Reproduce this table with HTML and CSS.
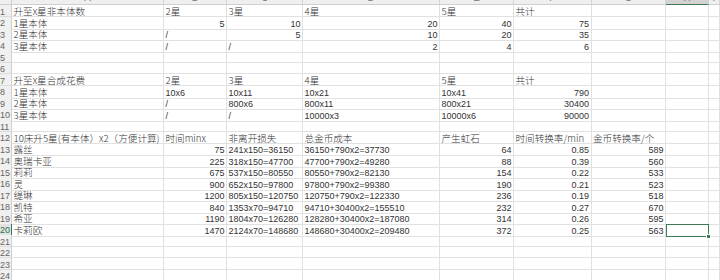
FILE: index.html
```html
<!DOCTYPE html>
<html lang="zh-CN">
<head>
<meta charset="utf-8">
<title>Sheet</title>
<link rel="stylesheet" href="styles.css">
</head>
<body>
<div class="sheet">
  <div class="hdr">
    <div class="corner"></div>
    <div class="ch"><span>A</span></div>
    <div class="ch"><span>B</span></div>
    <div class="ch"><span>C</span></div>
    <div class="ch"><span>D</span></div>
    <div class="ch"><span>E</span></div>
    <div class="ch"><span>F</span></div>
    <div class="ch"><span>G</span></div>
    <div class="ch cur"><span>H</span></div>
    <div class="ch"><span>I</span></div>
  </div>

  <div class="row"><div class="rh">1</div><div class="c t">升至x星非本体数</div><div class="c t">2星</div><div class="c t">3星</div><div class="c t">4星</div><div class="c t">5星</div><div class="c t">共计</div><div class="c"></div><div class="c"></div><div class="c"></div></div>
  <div class="row"><div class="rh">2</div><div class="c t">1星本体</div><div class="c n">5</div><div class="c n">10</div><div class="c n">20</div><div class="c n">40</div><div class="c n">75</div><div class="c"></div><div class="c"></div><div class="c"></div></div>
  <div class="row"><div class="rh">3</div><div class="c t">2星本体</div><div class="c f">/</div><div class="c n">5</div><div class="c n">10</div><div class="c n">20</div><div class="c n">35</div><div class="c"></div><div class="c"></div><div class="c"></div></div>
  <div class="row"><div class="rh">4</div><div class="c t">3星本体</div><div class="c f">/</div><div class="c f">/</div><div class="c n">2</div><div class="c n">4</div><div class="c n">6</div><div class="c"></div><div class="c"></div><div class="c"></div></div>
  <div class="row"><div class="rh">5</div><div class="c"></div><div class="c"></div><div class="c"></div><div class="c"></div><div class="c"></div><div class="c"></div><div class="c"></div><div class="c"></div><div class="c"></div></div>
  <div class="row"><div class="rh">6</div><div class="c"></div><div class="c"></div><div class="c"></div><div class="c"></div><div class="c"></div><div class="c"></div><div class="c"></div><div class="c"></div><div class="c"></div></div>
  <div class="row"><div class="rh">7</div><div class="c t">升至x星合成花费</div><div class="c t">2星</div><div class="c t">3星</div><div class="c t">4星</div><div class="c t">5星</div><div class="c t">共计</div><div class="c"></div><div class="c"></div><div class="c"></div></div>
  <div class="row"><div class="rh">8</div><div class="c t">1星本体</div><div class="c f">10x6</div><div class="c f">10x11</div><div class="c f">10x21</div><div class="c f">10x41</div><div class="c n">790</div><div class="c"></div><div class="c"></div><div class="c"></div></div>
  <div class="row"><div class="rh">9</div><div class="c t">2星本体</div><div class="c f">/</div><div class="c f">800x6</div><div class="c f">800x11</div><div class="c f">800x21</div><div class="c n">30400</div><div class="c"></div><div class="c"></div><div class="c"></div></div>
  <div class="row"><div class="rh">10</div><div class="c t">3星本体</div><div class="c f">/</div><div class="c f">/</div><div class="c f">10000x3</div><div class="c f">10000x6</div><div class="c n">90000</div><div class="c"></div><div class="c"></div><div class="c"></div></div>
  <div class="row"><div class="rh">11</div><div class="c"></div><div class="c"></div><div class="c"></div><div class="c"></div><div class="c"></div><div class="c"></div><div class="c"></div><div class="c"></div><div class="c"></div></div>
  <div class="row"><div class="rh">12</div><div class="c t">10床升5星(有本体）x2（方便计算)</div><div class="c t">时间minx</div><div class="c t">非离开损失</div><div class="c t">总金币成本</div><div class="c t">产生虹石</div><div class="c t">时间转换率/min</div><div class="c t">金币转换率/个</div><div class="c"></div><div class="c"></div></div>
  <div class="row"><div class="rh">13</div><div class="c t">露丝</div><div class="c n">75</div><div class="c f">241x150=36150</div><div class="c f">36150+790x2=37730</div><div class="c n">64</div><div class="c n">0.85</div><div class="c n">589</div><div class="c"></div><div class="c"></div></div>
  <div class="row"><div class="rh">14</div><div class="c t">奥瑞卡亚</div><div class="c n">225</div><div class="c f">318x150=47700</div><div class="c f">47700+790x2=49280</div><div class="c n">88</div><div class="c n">0.39</div><div class="c n">560</div><div class="c"></div><div class="c"></div></div>
  <div class="row"><div class="rh">15</div><div class="c t">莉莉</div><div class="c n">675</div><div class="c f">537x150=80550</div><div class="c f">80550+790x2=82130</div><div class="c n">154</div><div class="c n">0.22</div><div class="c n">533</div><div class="c"></div><div class="c"></div></div>
  <div class="row"><div class="rh">16</div><div class="c t">灵</div><div class="c n">900</div><div class="c f">652x150=97800</div><div class="c f">97800+790x2=99380</div><div class="c n">190</div><div class="c n">0.21</div><div class="c n">523</div><div class="c"></div><div class="c"></div></div>
  <div class="row"><div class="rh">17</div><div class="c t">缇琳</div><div class="c n">1200</div><div class="c f">805x150=120750</div><div class="c f">120750+790x2=122330</div><div class="c n">236</div><div class="c n">0.19</div><div class="c n">518</div><div class="c"></div><div class="c"></div></div>
  <div class="row"><div class="rh">18</div><div class="c t">凯特</div><div class="c n">840</div><div class="c f">1353x70=94710</div><div class="c f">94710+30400x2=155510</div><div class="c n">232</div><div class="c n">0.27</div><div class="c n">670</div><div class="c"></div><div class="c"></div></div>
  <div class="row"><div class="rh">19</div><div class="c t">希亚</div><div class="c n">1190</div><div class="c f">1804x70=126280</div><div class="c f">128280+30400x2=187080</div><div class="c n">314</div><div class="c n">0.26</div><div class="c n">595</div><div class="c"></div><div class="c"></div></div>
  <div class="row"><div class="rh cur">20</div><div class="c t">卡莉欧</div><div class="c n">1470</div><div class="c f">2124x70=148680</div><div class="c f">148680+30400x2=209480</div><div class="c n">372</div><div class="c n">0.25</div><div class="c n">563</div><div class="c sel"></div><div class="c"></div></div>
  <div class="row"><div class="rh">21</div><div class="c"></div><div class="c"></div><div class="c"></div><div class="c"></div><div class="c"></div><div class="c"></div><div class="c"></div><div class="c"></div><div class="c"></div></div>
  <div class="row"><div class="rh">22</div><div class="c"></div><div class="c"></div><div class="c"></div><div class="c"></div><div class="c"></div><div class="c"></div><div class="c"></div><div class="c"></div><div class="c"></div></div>
  <div class="row"><div class="rh">23</div><div class="c"></div><div class="c"></div><div class="c"></div><div class="c"></div><div class="c"></div><div class="c"></div><div class="c"></div><div class="c"></div><div class="c"></div></div>
  <div class="row"><div class="rh">24</div><div class="c"></div><div class="c"></div><div class="c"></div><div class="c"></div><div class="c"></div><div class="c"></div><div class="c"></div><div class="c"></div><div class="c"></div></div>
</div>
</body>
</html>
```
FILE: styles.css
```css
html, body {
  margin: 0;
  padding: 0;
  background: #ffffff;
  overflow: hidden;
}

.sheet {
  width: 720px;
  height: 280px;
  overflow: hidden;
  color: #333333;
}

.hdr,
.row {
  display: grid;
  grid-template-columns: 12px 152px 63px 76px 137px 74px 77.5px 74.5px 43px 1fr;
}

.hdr {
  height: 5px;
  background: #efefef;
}

.corner {
  box-sizing: border-box;
  border-right: 1px solid #cfcfcf;
  border-bottom: 1px solid #cfcfcf;
}

.ch {
  box-sizing: border-box;
  overflow: hidden;
  border-right: 1px solid #d4d4d4;
  border-bottom: 1px solid #cfcfcf;
  text-align: center;
  font-family: "Liberation Sans", Arial, sans-serif;
  font-size: 10px;
  color: #777777;
}

.ch span {
  display: block;
  line-height: 10px;
  margin-top: -7px;
}

.ch.cur {
  background: #d3d3d3;
  border-bottom: 1px solid #3e7a52;
}

.row {
  height: 11.5px;
}

.rh {
  box-sizing: border-box;
  background: #f0f0f0;
  border-right: 1px solid #cfcfcf;
  border-bottom: 1px solid #dcdcdc;
  font-family: "Liberation Sans", Arial, sans-serif;
  font-size: 9px;
  line-height: 10px;
  padding-top: 1.5px;
  color: #666666;
  white-space: nowrap;
  overflow: hidden;
}

.rh.cur {
  color: #217346;
  background: #e2e2e2;
  border-right: 1px solid #3e7a52;
}

.c {
  box-sizing: border-box;
  border-right: 1px solid #e1e1e1;
  border-bottom: 1px solid #e1e1e1;
  white-space: nowrap;
  padding: 0 1.5px;
  overflow: visible;
  min-width: 0;
}

.t {
  font-family: "Noto Sans CJK SC", "Liberation Sans", sans-serif;
  font-size: 9.6px;
  font-weight: 300;
  line-height: 10px;
  padding-top: 1px;
  text-align: left;
}

.n,
.f {
  font-family: "Liberation Sans", Arial, sans-serif;
  font-size: 9px;
  line-height: 10px;
  padding-top: 2px;
}

.n {
  text-align: right;
}

.f {
  text-align: left;
}

.sel {
  position: relative;
  border: 1px solid #3e7a52;
}

.sel::after {
  content: "";
  position: absolute;
  right: -3px;
  bottom: -3px;
  width: 3px;
  height: 3px;
  background: #3e7a52;
  border: 1px solid #ffffff;
}
```
